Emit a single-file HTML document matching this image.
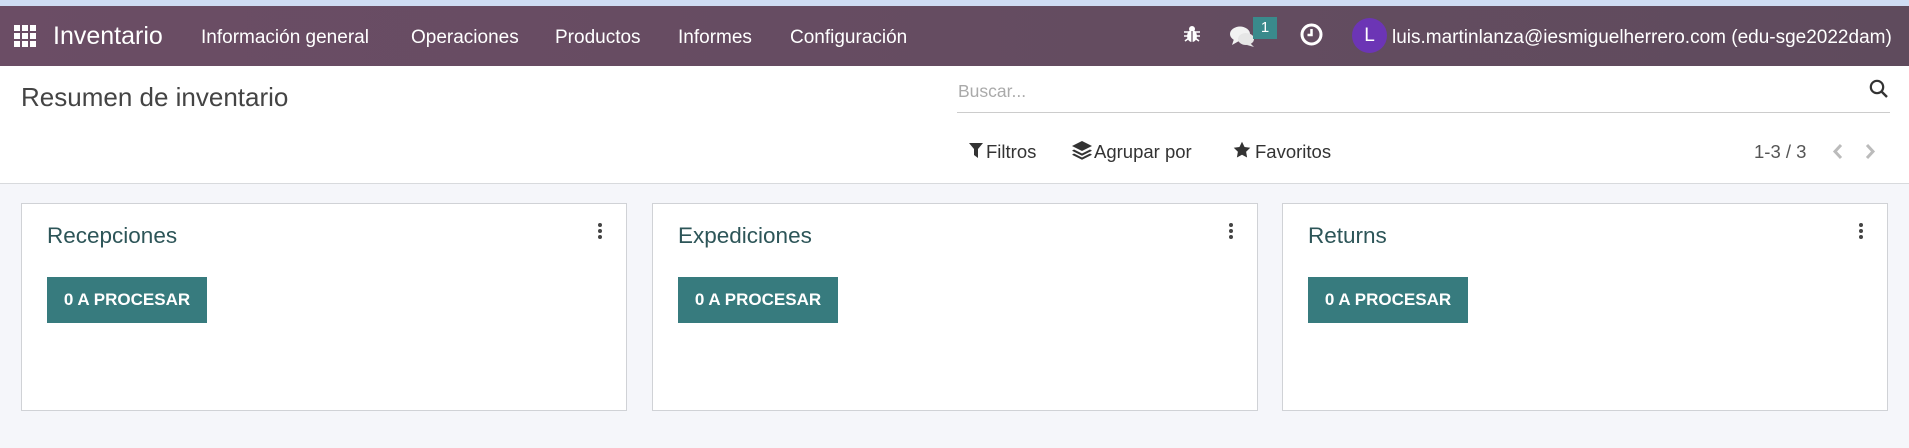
<!DOCTYPE html>
<html><head><meta charset="utf-8">
<style>
*{margin:0;padding:0;box-sizing:border-box}
body{width:1909px;height:448px;overflow:hidden;background:#f5f6fa;font-family:"Liberation Sans",sans-serif;position:relative}
.a{position:absolute;white-space:nowrap}
.strip{left:0;top:0;width:1909px;height:6px;background:#cfdcf3}
.nav{left:0;top:6px;width:1909px;height:60px;background:linear-gradient(90deg,#6b4d65,#5f4b5d)}
.nav .m{color:#fff;font-size:19px;top:21px}
.cp{left:0;top:66px;width:1909px;height:118px;background:#fff;border-bottom:1px solid #d8dadd}
.card{top:203px;width:606px;height:208px;background:#fff;border:1px solid #d0d2d6}
.card h3{position:absolute;left:25px;top:19px;font-size:22.5px;font-weight:normal;color:#2d5558}
.btn{position:absolute;left:25px;top:73px;width:160px;height:46px;background:#377b7e;color:#fff;font-weight:bold;font-size:17px;line-height:46px;text-align:center}
.dots{position:absolute;left:576px;top:19px;width:4px}
.dots i{display:block;width:4px;height:4px;border-radius:2px;background:#444;margin-bottom:2px}
.tb{top:141px;font-size:18.5px;color:#333}
</style></head><body>
<div class="a strip"></div>
<div class="a nav">
 <svg class="a" style="left:14px;top:19px" width="22" height="22" viewBox="0 0 22 22" fill="#fff">
  <rect x="0" y="0" width="6" height="6"/><rect x="8" y="0" width="6" height="6"/><rect x="16" y="0" width="6" height="6"/>
  <rect x="0" y="8" width="6" height="6"/><rect x="8" y="8" width="6" height="6"/><rect x="16" y="8" width="6" height="6"/>
  <rect x="0" y="16" width="6" height="6"/><rect x="8" y="16" width="6" height="6"/><rect x="16" y="16" width="6" height="6"/></svg>
 <div class="a" style="left:53px;top:16px;color:#fff;font-size:25px">Inventario</div>
 <div class="a m" style="left:201px">Información general</div>
 <div class="a m" style="left:411px">Operaciones</div>
 <div class="a m" style="left:555px">Productos</div>
 <div class="a m" style="left:678px">Informes</div>
 <div class="a m" style="left:790px">Configuración</div>
 <svg class="a" style="left:1184px;top:19px" width="16" height="18" viewBox="0 0 16 18" fill="#fff"><ellipse cx="8" cy="11" rx="5" ry="6"/><circle cx="8" cy="4" r="3"/><path d="M0 7h16M0 11h16M1 16l4-3M15 16l-4-3" stroke="#fff" stroke-width="1.6"/><path d="M8 6v11" stroke="#5f4b5d" stroke-width="1.2"/></svg>
 <svg class="a" style="left:1230px;top:20px" width="26" height="22" viewBox="0 0 26 22" fill="#f2f2f2"><ellipse cx="10" cy="8" rx="10" ry="7.5"/><path d="M4 13l-2 6 7-4z"/><ellipse cx="16" cy="13" rx="8" ry="6" fill="#e6e6e6"/><path d="M20 17l4 4-7-2z" fill="#e6e6e6"/></svg>
 <div class="a" style="left:1253px;top:11px;width:24px;height:22px;background:#3a8a8c;color:#fff;font-size:15px;text-align:center;line-height:22px">1</div>
 <svg class="a" style="left:1300px;top:17px" width="23" height="23" viewBox="0 0 23 23"><circle cx="11.5" cy="11.5" r="9.5" stroke="#fff" stroke-width="3" fill="none"/><path d="M11.5 6v6h-4" stroke="#fff" stroke-width="2.5" fill="none"/></svg>
 <div class="a" style="left:1352px;top:12px;width:35px;height:35px;border-radius:50%;background:#6c35b5;color:#fff;font-size:19px;text-align:center;line-height:35px">L</div>
 <div class="a m" style="left:1392px">luis.martinlanza@iesmiguelherrero.com (edu-sge2022dam)</div>
</div>
<div class="a cp">
 <div class="a" style="left:21px;top:16px;font-size:26px;color:#444">Resumen de inventario</div>
 <div class="a" style="left:958px;top:15px;font-size:17.5px;color:#aaa">Buscar...</div>
 <div class="a" style="left:957px;top:46px;width:933px;height:1px;background:#ccc"></div>
 <svg class="a" style="left:1869px;top:13px" width="20" height="20" viewBox="0 0 20 20"><circle cx="8" cy="8" r="6.2" stroke="#333" stroke-width="2.2" fill="none"/><path d="M12.5 12.5l5.5 5.5" stroke="#333" stroke-width="2.4"/></svg>
</div>
<svg class="a" style="left:969px;top:143px" width="14" height="15" viewBox="0 0 14 15" fill="#333"><path d="M0 0h14l-5 6v9l-4-3v-6z"/></svg>
<div class="a tb" style="left:986px">Filtros</div>
<svg class="a" style="left:1072px;top:141px" width="20" height="20" viewBox="0 0 20 20" fill="#333"><path d="M10 0l10 5-10 5-10-5z"/><path d="M2 8.5l8 4 8-4 2 1.2-10 5-10-5z"/><path d="M2 12.5l8 4 8-4 2 1.2-10 5-10-5z"/></svg>
<div class="a tb" style="left:1094px">Agrupar por</div>
<svg class="a" style="left:1233px;top:141px" width="18" height="18" viewBox="0 0 24 24" fill="#333"><path d="M12 1l3.4 7 7.6 1-5.5 5.3 1.3 7.7L12 18.4 5.2 22l1.3-7.7L1 9l7.6-1z"/></svg>
<div class="a tb" style="left:1255px">Favoritos</div>
<div class="a tb" style="left:1754px;color:#555">1-3 / 3</div>
<svg class="a" style="left:1832px;top:143px" width="12" height="17" viewBox="0 0 12 17"><path d="M9 2L3 8.5 9 15" stroke="#bbb" stroke-width="3" fill="none"/></svg>
<svg class="a" style="left:1864px;top:143px" width="12" height="17" viewBox="0 0 12 17"><path d="M3 2l6 6.5L3 15" stroke="#bbb" stroke-width="3" fill="none"/></svg>

<div class="a card" style="left:21px"><h3>Recepciones</h3><div class="btn">0 A PROCESAR</div><div class="dots"><i></i><i></i><i></i></div></div>
<div class="a card" style="left:652px"><h3>Expediciones</h3><div class="btn">0 A PROCESAR</div><div class="dots"><i></i><i></i><i></i></div></div>
<div class="a card" style="left:1282px"><h3>Returns</h3><div class="btn">0 A PROCESAR</div><div class="dots"><i></i><i></i><i></i></div></div>
</body></html>
